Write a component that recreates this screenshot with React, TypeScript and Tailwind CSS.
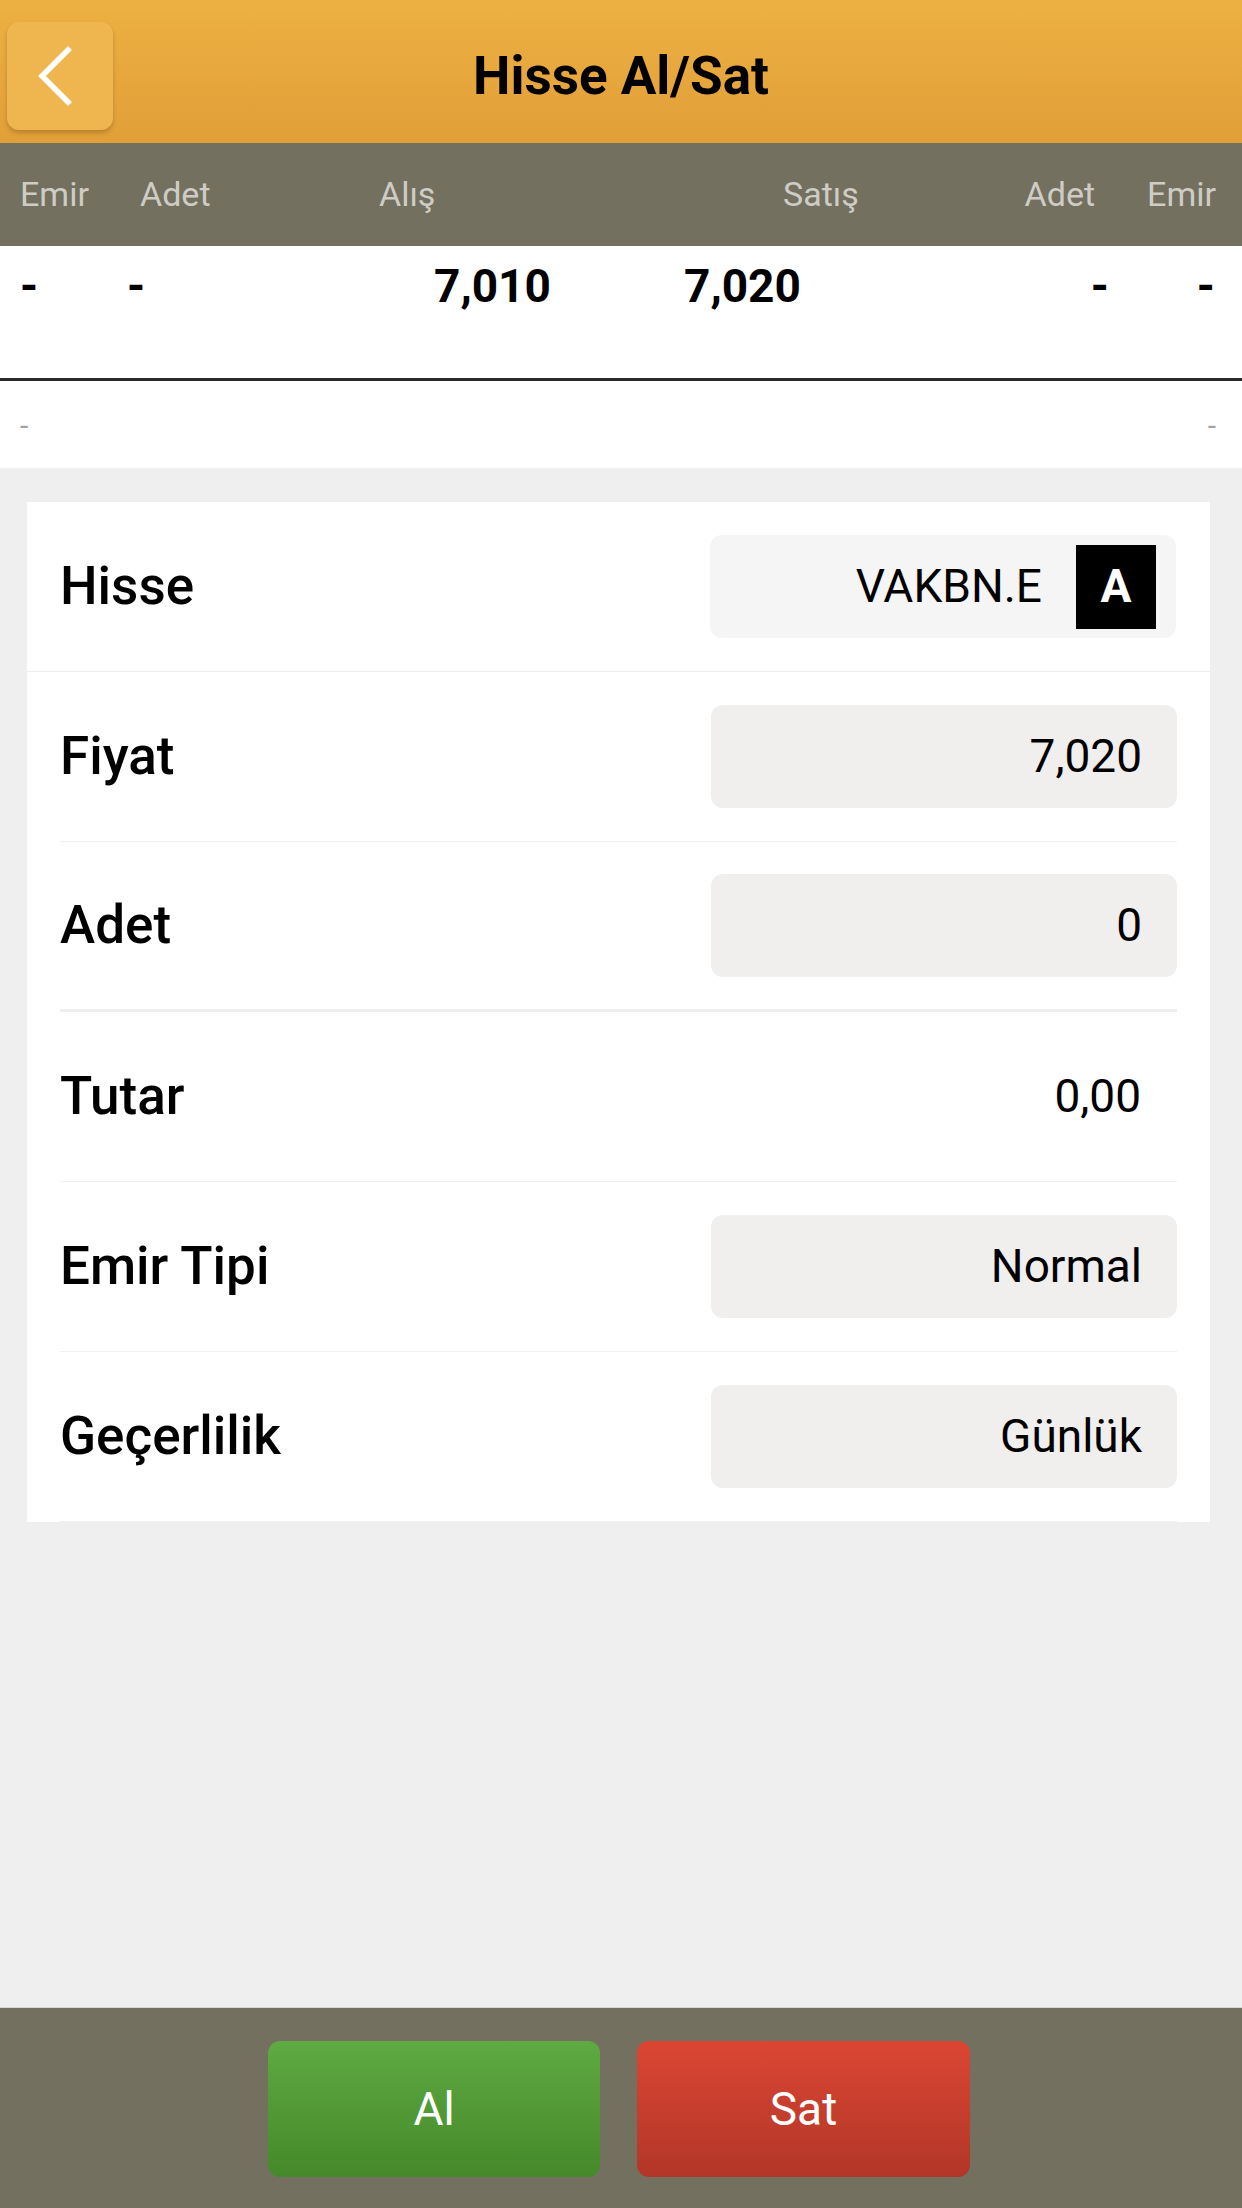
import React from 'react';

const rows = [
    { id: 'fiyat', label: 'Fiyat', value: '7,020', field: true, thick: false },
    { id: 'adet', label: 'Adet', value: '0', field: true, thick: true },
    { id: 'tutar', label: 'Tutar', value: '0,00', field: false, thick: false },
    { id: 'emir', label: 'Emir Tipi', value: 'Normal', field: true, thick: false },
    { id: 'gecerlilik', label: 'Geçerlilik', value: 'Günlük', field: true, thick: false },
];

export default function App() {
    return (
        <div className="h-[2208px] w-[1242px] flex flex-col bg-[#efefef] font-['Roboto',sans-serif] text-black overflow-hidden">
            {/* Header */}
            <div className="relative h-[143px] shrink-0 flex items-center justify-center pt-[9px] bg-gradient-to-b from-[#edb042] to-[#e19f38]">
                <button className="absolute left-[7px] top-[22px] w-[106px] h-[108px] rounded-[12px] bg-[#efb64f] shadow-[0_3px_4px_rgba(0,0,0,0.18)] flex items-center justify-center">
                    <svg width="106" height="108" viewBox="0 0 106 108" fill="none">
                        <path d="M63 26 L35 54 L63 82" stroke="white" strokeWidth="5.5" />
                    </svg>
                </button>
                <h1 className="text-[53px] font-bold leading-none">Hisse Al/Sat</h1>
            </div>

            {/* Tablo basligi */}
            <div className="h-[103px] shrink-0 bg-[#737060] flex items-center px-[20px] text-[34px] text-[#cfccc5]">
                <span className="w-[120px]">Emir</span>
                <span className="w-[239px]">Adet</span>
                <span className="w-[404px]">Alış</span>
                <span>Satış</span>
                <span className="ml-auto">Adet</span>
                <span className="ml-[52px] mr-[6px]">Emir</span>
            </div>

            {/* Derinlik */}
            <div className="h-[132px] shrink-0 bg-white pl-[20px] pr-[27px] pt-[12px] text-[46px] font-bold leading-[56px]">
                <div className="flex w-full">
                    <span className="w-[107px]">-</span>
                    <span className="w-[307px]">-</span>
                    <span className="w-[250px]">7,010</span>
                    <span>7,020</span>
                    <span className="ml-auto">-</span>
                    <span className="ml-[88px]">-</span>
                </div>
            </div>
            <div className="h-[4px] shrink-0 bg-white flex flex-col">
                <div className="h-[3px] bg-[#2a2a28]" />
            </div>
            <div className="h-[86px] shrink-0 bg-white flex items-center justify-between px-[20px] text-[30px] text-[#a3a3a3]">
                <span>-</span>
                <span className="mr-[6px]">-</span>
            </div>

            {/* Form */}
            <div className="flex-1">
                <div className="mt-[34px] ml-[27px] mr-[32px] bg-white">
                    <div className="h-[170px] flex items-center justify-between pl-[33px] pr-[34px] border-b border-[#eeeeee]">
                        <span className="text-[53px] font-medium">Hisse</span>
                        <div className="w-[466px] h-[103px] rounded-[12px] bg-[#f5f5f5] flex items-center justify-end pr-[20px]">
                            <span className="text-[46px]">VAKBN.E</span>
                            <span className="ml-[34px] w-[80px] h-[84px] bg-black text-white text-[46px] font-bold flex items-center justify-center">A</span>
                        </div>
                    </div>
                    {rows.map(row => (
                        <div key={row.id} className="px-[33px]">
                            <div className={`h-[170px] flex items-center justify-between ${row.thick ? 'border-b-[3px] border-[#efefef]' : 'border-b border-[#f0f0f0]'}`}>
                                <span className="text-[53px] font-medium">{row.label}</span>
                                {row.field ? (
                                    <div className="w-[466px] h-[103px] rounded-[12px] bg-[#f0efee] flex items-center justify-end pr-[35px] text-[46px]">
                                        {row.value}
                                    </div>
                                ) : (
                                    <span className="pr-[36px] text-[46px]">{row.value}</span>
                                )}
                            </div>
                        </div>
                    ))}
                </div>
            </div>

            {/* Alt butonlar */}
            <div className="h-[201px] shrink-0 bg-[#737060] border-t border-[#d6d6d6] flex justify-center gap-[37px] pt-[33px] pr-[4px]">
                <button className="w-[332px] h-[136px] rounded-[12px] bg-gradient-to-b from-[#5faa42] to-[#45892a] text-white text-[46px]">
                    Al
                </button>
                <button className="w-[333px] h-[136px] rounded-[12px] bg-gradient-to-b from-[#dc4633] to-[#b23628] text-white text-[46px]">
                    Sat
                </button>
            </div>
        </div>
    );
}
